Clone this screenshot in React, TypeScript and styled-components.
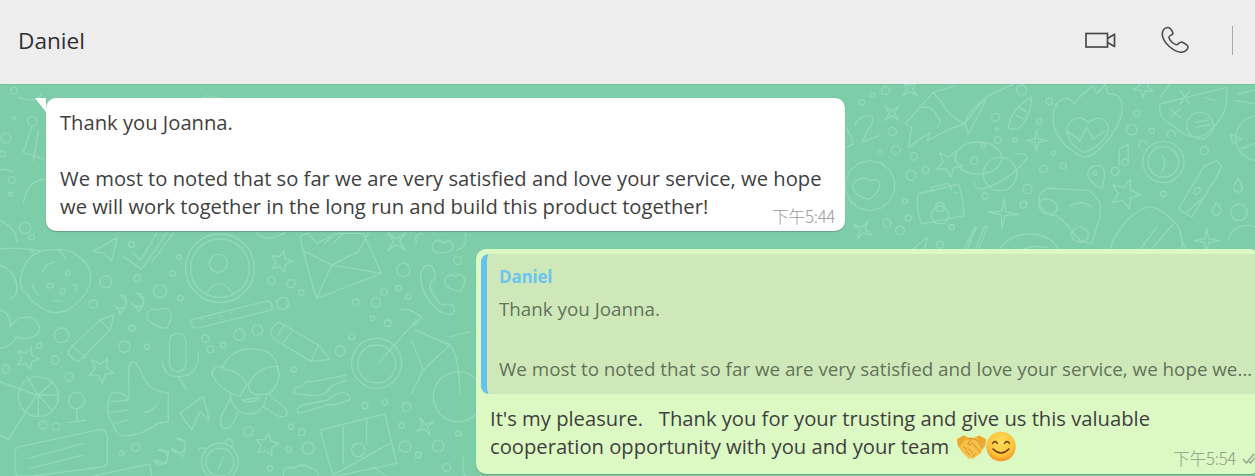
import React from "react";
import styled, { createGlobalStyle } from "styled-components";

const Global = createGlobalStyle`
  html, body { margin: 0; padding: 0; background: #7dcda8; }
  body { font-family: "Open Sans", "Noto Sans", sans-serif; }
`;

const Page = styled.div`
  width: 1255px;
  height: 476px;
  overflow: hidden;
  display: flex;
  flex-direction: column;
`;
const Header = styled.header`
  height: 84px;
  flex: none;
  background: #ededed;
  display: flex;
  align-items: center;
  justify-content: space-between;
  padding: 0 22px 4px 18px;
  box-sizing: border-box;
`;
const Name = styled.div`
  font-size: 22.6px;
  color: #2f2f2f;
`;
const Actions = styled.div`
  display: flex;
  align-items: center;
`;
const IconButton = styled.button<{ $gap: number }>`
  border: 0;
  padding: 0;
  background: none;
  display: flex;
  margin-right: ${(p) => p.$gap}px;
`;
const Divider = styled.div`
  width: 1px;
  height: 29px;
  background: #a9a9a9;
`;
const Chat = styled.main`
  position: relative;
  flex: 1;
  background: #7dcda8;
  box-shadow: inset 0 1px 0 rgba(0, 0, 0, 0.05);
  display: flex;
  flex-direction: column;
  gap: 18px;
  padding: 14px 0 0 46px;
`;
const Pattern = styled.svg`
  position: absolute;
  left: 0;
  top: 0;
  width: 1255px;
  height: 392px;
  filter: blur(0.5px);
  fill: none;
  stroke: #92d9b9;
  stroke-width: 4.2;
  stroke-linecap: round;
  stroke-linejoin: round;
`;
const Bubble = styled.article<{ $outgoing?: boolean }>`
  position: relative;
  box-sizing: border-box;
  border-radius: 10px;
  box-shadow: 0 1px 1px rgba(0, 0, 0, 0.22);
  color: #3f3f3f;
  font-size: 20.2px;
  line-height: 28px;
  width: ${(p) => (p.$outgoing ? 784 : 799)}px;
  margin-left: ${(p) => (p.$outgoing ? 430 : 0)}px;
  background: ${(p) => (p.$outgoing ? "#dcf8c3" : "#ffffff")};
  padding: ${(p) => (p.$outgoing ? "5px" : "10px 14px 11px")};
`;
const Tail = styled.span`
  position: absolute;
  left: -11px;
  top: 0;
  width: 0;
  height: 0;
  border-top: 14px solid #fff;
  border-left: 11px solid transparent;
`;
const Paragraph = styled.p<{ $pre?: boolean }>`
  margin: 0;
  white-space: ${(p) => (p.$pre ? "pre" : "normal")};
`;
const Quote = styled.section`
  box-sizing: border-box;
  height: 140px;
  background: #cfe8b9;
  border-left: 6px solid #65c3ec;
  border-radius: 8px 0 0 8px;
  padding: 9px 0 0 12px;
  color: #62735a;
  font-size: 18.8px;
  line-height: 30px;
`;
const QuoteAuthor = styled.div`
  color: #6cc5ee;
  font-weight: 700;
  font-size: 17px;
  letter-spacing: -0.2px;
  line-height: 28px;
  margin-bottom: 3px;
`;
const QuoteLine = styled.div`
  white-space: nowrap;
`;
const QuoteSpacer = styled.div`
  height: 30px;
`;
const Reply = styled.div`
  padding: 10px 9px 0;
  height: 75px;
  box-sizing: border-box;
`;
const Time = styled.time<{ $outgoing?: boolean }>`
  position: absolute;
  right: ${(p) => (p.$outgoing ? 0 : 10)}px;
  bottom: ${(p) => (p.$outgoing ? 5 : 4)}px;
  display: flex;
  align-items: center;
  gap: 6px;
  font-family: "Noto Sans CJK SC", "Open Sans", sans-serif;
  font-weight: 300;
  font-size: 16.8px;
  line-height: 22px;
  letter-spacing: -0.3px;
  color: ${(p) => (p.$outgoing ? "#8f9d86" : "#9a9a9a")};
`;
const EmojiRow = styled.span`
  display: inline-flex;
  vertical-align: middle;
  margin-left: 3px;
  margin-top: -4px;
  align-items: center;
`;

/* ---- doodle helpers, coordinates are 3x page pixels ---- */
type C = [number, number, number];
const star = (cx: number, cy: number, R: number, r: number, n = 5, rot = -90) => {
  const pts: string[] = [];
  for (let i = 0; i < n * 2; i++) {
    const a = ((rot + (i * 180) / n) * Math.PI) / 180;
    const d = i % 2 ? r : R;
    pts.push(`${(cx + d * Math.cos(a)).toFixed(1)},${(cy + d * Math.sin(a)).toFixed(1)}`);
  }
  return pts.join(" ");
};
const blob = (cx: number, cy: number, R: number, n: number, amp: number) => {
  let d = "";
  for (let i = 0; i < n; i++) {
    const a1 = (i / n) * 2 * Math.PI;
    const a2 = ((i + 1) / n) * 2 * Math.PI;
    const am = (a1 + a2) / 2;
    const p = (a: number, q: number) => `${(cx + q * Math.cos(a)).toFixed(1)} ${(cy + q * Math.sin(a)).toFixed(1)}`;
    d += (i === 0 ? `M${p(a1, R)}` : "") + `Q${p(am, R + amp)} ${p(a2, R)}`;
  }
  return d + "Z";
};

const dotsA: C[] = [
  [317,155,18],[280,222,12],[412,145,10],[518,130,8],[537,82,7],[480,183,20],[542,204,8],[395,43,9],[185,316,22],[118,347,8],[397,295,9],[373,350,17],[441,350,8],[165,390,12],[208,441,12],[18,417,12],[95,22,8],[616,326,11],[632,358,10],[670,345,8],[718,314,17],[772,300,16],[1021,363,15],[1055,320,9],[882,418,8],[815,151,11],[873,161,12],[904,188,8],[848,220,18],[1210,120,20],[1067,217,10],[1128,217,14],[1152,185,10],[1196,175,8],[1225,200,8],[1118,265,7],[1163,280,10],[1373,92,12],[1095,527,9],[1154,517,8],[1220,532,13],[1205,586,8],[1375,610,8],[745,604,14],[873,590,8],[905,607,10],[925,655,18],[866,658,8],[1215,650,17],[1315,648,17],[1255,675,9],[1340,712,12],[365,670,7],[407,652,12],[128,585,12],[168,590,11],[810,715,8],
  [655,100,27],[660,115,103],[660,115,88],
];
const pathsA: string[] = [
  "M620 192Q655 130 700 192",
  "M0 58C30 48 90 60 120 62",
  "M135 240C120 230 90 215 80 190C50 175 62 130 75 105C90 70 130 55 165 60C210 50 265 90 270 130C280 175 240 215 205 240C175 250 150 250 135 240Z",
  "M125 125Q140 100 165 95M175 60Q190 70 195 85M205 120a6 9 20 1 0 .1 0M150 160a10 7 0 1 0 .1 0M190 175a7 10 20 1 0 .1 0M215 165Q240 160 225 185M160 212L185 214M100 160Q95 175 115 195",
  "M0 105Q40 120 50 160Q55 200 30 205",
  "M0 240Q35 250 30 290Q60 250 100 265Q130 290 110 315Q70 335 50 320Q30 355 0 355",
  "M280 65L352 22L335 92L312 70Z",
  "M372 80L425 118L500 8M395 65L422 90L470 10M455 98L522 8",
  "M572 270L800 213Q822 215 815 240L590 295Q568 290 572 270ZM603 268l4 0M630 265l4 0M660 258l4 0M692 250l4 0",
  "M205 360L300 270L340 255L332 298L240 392Q225 398 205 372ZM215 345L258 385M300 270L330 300",
  "M812 300L835 275L955 345L990 388L935 395L818 325ZM850 290L832 318M875 305L852 335M955 345L935 392",
  "M508 350V335A25 25 0 0 1 558 335V400A25 25 0 0 1 508 400ZM487 395C490 430 515 440 535 440C570 440 600 420 595 365M535 440L560 478",
  "M385 510C395 480 375 430 392 400C408 385 415 410 430 440C445 470 460 480 475 482L505 490V575L475 580C445 600 415 618 370 618C345 615 345 590 335 575C320 560 320 510 335 490C350 485 380 490 385 510ZM335 515L385 510M330 548L385 540M345 580L385 570M430 545Q450 550 470 525",
  "M665 420C680 370 730 350 770 358C810 360 835 390 835 425",
  "M635 430C640 405 665 405 680 420C700 420 735 440 740 465L720 500C690 490 650 470 635 430Z",
  "M745 465C760 430 800 405 830 410C845 425 835 465 810 490L770 495C755 490 745 480 745 465Z",
  "M690 495C695 530 720 555 755 552C780 548 795 530 800 495",
  "M690 510C670 540 650 580 670 595C695 600 705 570 715 545M805 490C820 510 870 535 860 555C845 570 820 550 790 530",
  "M725 510Q755 525 780 503Z",
  "M0 455L110 495L25 628L0 615M115 440a60 60 0 1 1 -.1 0M115 495L175 495M115 495L160 455M115 495L155 540M115 495V555M115 495L80 440",
  "M230 488a24 24 0 1 1 -.1 0M230 536V572M205 578L258 570",
  "M885 490Q875 470 905 470Q915 450 940 455L1040 435M880 490L945 498Q990 490 990 470L1040 450M895 545Q885 530 910 525L985 510Q1000 490 1030 488Q1055 495 1050 510L1000 525Q980 520 970 530L895 550Z",
  "M575 600L540 550L580 520L610 500L628 570L600 545Z",
  "M1130 325a75 75 0 1 1 -.1 0M1130 345a57 57 0 1 1 -.1 0M1135 400L1250 270M1205 240Q1225 230 1265 262L1240 290M1245 300L1350 345L1270 420L1235 330M1345 340Q1375 360 1380 490M1350 320L1410 305M1270 420L1235 490M1375 425a75 75 0 1 1 -.1 0",
  "M960 600L1155 552L1190 700L1000 740ZM1030 585V700M1100 565V640M1075 640a20 20 0 1 1 -.1 0M1000 735L1170 640M1120 710L1160 740",
  "M60 650L300 598Q325 600 322 630L322 690Q325 710 300 712L100 738H60Q45 740 45 710V670Q45 650 60 650ZM85 685L250 640M90 715L250 675",
  "M280 738L450 702L455 738",
  "M360 195a20 20 0 1 1 -16 32Q360 240 358 252Q372 240 380 218ZM410 190a20 20 0 1 1 -16 30Q412 232 415 245Q432 230 432 210ZM475 660a22 22 0 1 1 -14 30Q480 695 498 700Q506 680 505 665ZM530 625a22 22 0 1 1 -16 30Q530 662 550 680Q558 650 555 635Z",
  "M470 240C455 230 435 250 442 265C450 285 485 295 500 295C515 270 520 245 500 235C488 232 480 240 470 240Z",
  "M1365 140C1350 125 1330 145 1335 160C1340 175 1370 185 1380 185C1395 165 1400 145 1385 135C1375 130 1370 135 1365 140Z",
  "M1320 30C1305 30 1290 45 1300 62C1312 72 1340 72 1355 58C1365 45 1355 30 1340 35Q1330 42 1320 30Z",
  "M1285 105C1265 110 1258 130 1265 165C1275 205 1310 250 1345 254C1365 252 1370 238 1355 225C1335 215 1330 235 1315 215C1295 190 1280 160 1300 150C1310 145 1305 105 1285 105Z",
  "M900 20C910 10 920 10 925 10L950 40L1010 10L1090 10L1145 130L950 205Q925 130 900 20ZM950 205L995 105L1145 130M905 60L995 105L1075 65L1105 10M975 40L1005 10M1000 40L1030 10",
  "M1250 40Q1240 15 1265 10M1395 10Q1405 50 1370 60",
  "M770 10Q800 40 860 5",
  "M660 640a55 55 0 1 1 -.1 0M660 655a42 42 0 1 1 -.1 0M675 640a12 12 0 1 1 20 8M670 680L655 720M595 660a10 10 0 1 1 20 8",
  "M850 738Q850 705 885 715Q905 695 935 715Q955 720 955 738",
  "M1390 680Q1385 738 1400 738",
];
const starsA: [number, number, number, number, number, number][] = [
  [843,95,34,15,5,-75],[82,385,36,16,5,-70],[303,420,40,18,5,-60],[800,645,36,17,5,-80],
  [1190,35,38,8,4,-45],[1275,590,30,7,4,-30],
];

const dotsB: C[] = [
  [65,55,9],[97,33,7],[137,20,12],[157,143,12],[120,205,7],[167,198,13],[222,217,11],[213,274,15],[257,257,10],[403,230,11],[195,352,7],[205,402,9],[140,417,12],[180,440,13],[435,337,9],[562,315,14],[550,362,10],[335,430,8],[545,18,15],[628,52,10],[598,112,8],[467,100,12],[473,168,10],[470,135,4],[525,168,6],[430,185,6],[640,208,6],[610,255,11],[670,245,9],[875,137,16],[890,87,9],[935,140,8],[1093,200,12],[970,330,8],[1197,385,25],[300,482,10],
];
const pathsB: string[] = [
  "M45 125Q55 92 90 95Q110 105 85 135L65 175L118 155",
  "M20 130L40 180L10 195",
  "M205 190L215 130L195 120L240 70L280 25L345 5M205 190L270 145L262 170L330 135L372 120L440 38L520 0M240 70Q280 65 290 95L300 110L295 130M280 25Q310 60 330 90L372 120M375 120L385 90L440 38L425 75L385 150Z",
  "M505 130Q515 70 575 40Q575 95 540 130Q515 140 505 130ZM540 70L560 85M530 95L550 105",
  "M640 85C650 40 690 30 700 60C715 40 740 20 760 5L770 30L795 0L805 30C845 25 850 60 845 90C830 150 770 215 735 220C700 210 650 170 640 120ZM680 130C710 80 740 110 745 115C790 85 810 120 805 140C795 175 750 200 735 205C705 195 680 170 680 130ZM680 140L720 170L740 130L760 165L795 140",
  "M960 40L990 0M1160 10C1165 60 1155 100 1110 140C1080 170 1040 165 1000 125C970 110 955 95 960 60ZM1040 125a40 40 0 1 0 80 0a40 40 0 1 0 -80 0M1065 115L1105 108M1070 130L1110 122M1020 20L1050 60M1050 20L1020 60M990 75L1020 100M1020 75L990 100M1095 40L1125 50",
  "M1255 95a65 65 0 1 0 0 135M1170 150L1205 165L1180 180ZM1205 195L1250 175M1195 30L1255 15M1185 50L1255 60",
  blob(90, 305, 72, 14, 8),
  "M90 290C75 275 40 285 38 310C45 335 75 345 90 345C110 330 125 310 118 295C110 285 100 285 90 290Z",
  "M235 330L355 300Q370 340 372 395L245 420Q225 370 235 330ZM280 322L275 310L325 298L335 315M300 367a26 26 0 1 0 .1 0M300 355a14 14 0 1 0 .1 0M342 325l6 0",
  "M415 270a70 48 0 1 1 .1 0ZM405 295Q395 310 425 315Q505 295 560 225Q565 205 530 210M480 220a50 50 0 1 0 .1 0",
  "M600 330L620 312L750 320L780 355V400L755 480L720 470L680 420L650 395C610 395 590 360 600 330ZM620 345a28 22 20 1 0 .1 0M720 430a25 22 0 1 0 .1 0M690 365Q730 345 755 370",
  "M765 245C745 250 740 265 745 280C755 295 775 310 785 315C795 285 800 255 780 245Z M765 262a6 6 0 1 0 .1 0",
  "M825 250a12 12 0 1 0 .1 0M838 245V195L865 180V225M855 225a10 10 0 1 0 .1 0",
  "M970 172a62 62 0 1 0 .1 0M970 188a46 46 0 1 0 .1 0M965 212Q985 240 965 262M900 190a12 12 0 1 1 20 -10M985 160a12 12 0 1 1 20 -5",
  "M1055 400L1015 375L1090 250L1115 235L1130 230L1145 245L1135 270ZM1085 345L1040 385M1075 310a12 8 -50 1 0 .1 0",
  "M1195 285Q1165 320 1200 325Q1215 315 1195 285ZM1130 355Q1105 390 1130 395Q1155 385 1130 355Z",
  "M810 510C810 460 870 385 920 370Q950 360 1010 420Q1030 450 1025 510M890 510L950 430M930 500L1000 420M1020 450L1040 510",
  "M1165 470Q1175 430 1210 425Q1240 422 1245 430",
  "M470 510Q500 450 570 450Q640 450 660 510M530 510Q560 480 620 490",
  "M200 510L262 460L250 510M365 510L405 430L410 430L375 510M400 510L435 425L442 430L410 510",
];
const starsB: [number, number, number, number, number, number][] = [
  [328,238,42,19,5,-60],[855,330,46,20,5,-70],[910,10,32,12,5,-50],
  [155,88,30,7,4,-45],[590,170,32,7,4,-90],[490,388,46,8,4,-85],[68,438,32,8,4,-60],[210,14,32,8,4,-45],[1100,470,38,8,4,-90],
];
const dotsC: C[] = [
  [42,20,10],[42,102,5],[18,162,15],[8,210,9],[97,112,14],[228,62,13],[185,75,7],[190,50,7],[35,288,10],[32,330,6],[75,432,17],[95,500,5],[280,100,4],[640,62,25],
];
const pathsC: string[] = [
  "M95 130L70 205L130 225M115 140L100 230M55 40Q110 60 125 30M260 60L335 75L310 45L280 90M370 80L435 45M560 80L620 35M830 80L890 60",
  "M0 260Q20 250 35 265M70 360Q80 290 135 285M0 410Q50 430 50 475",
];

const Doodle = ({ dots, paths, stars, x, y }: { dots: C[]; paths: string[]; stars: typeof starsA; x: number; y: number }) => (
  <g transform={`translate(${x} ${y}) scale(0.3333)`}>
    {dots.map(([cx, cy, r], i) => (
      <circle key={i} cx={cx} cy={cy} r={r} />
    ))}
    {paths.map((d, i) => (
      <path key={i} d={d} />
    ))}
    {stars.map(([cx, cy, R, r, n, rot], i) => (
      <polygon key={i} points={star(cx, cy, R, r, n, rot)} />
    ))}
  </g>
);

const VideoIcon = () => (
  <svg width="31" height="17" viewBox="0 0 31 17" fill="none" stroke="#4a4a4a" strokeWidth="1.7">
    <rect x="1" y="1.5" width="21.5" height="13.5" />
    <path d="M22.5 6.5L29.5 2.2V14.5L22.5 10.5" strokeLinejoin="round" />
  </svg>
);
const PhoneIcon = () => (
  <svg width="28" height="28" viewBox="302 78 85 84" fill="none" stroke="#4a4a4a" strokeWidth="4.8" strokeLinejoin="round">
    <path d="M322 82C312 82 305 92 306 105C310 130 340 155 362 157C375 158 384 148 384 142C384 136 374 130 365 126C358 124 354 136 347 134C338 130 328 120 326 112C324 106 340 106 338 98C335 90 330 82 322 82Z" />
  </svg>
);
const Handshake = () => (
  <svg width="29" height="26" viewBox="0 0 30 26">
    <path d="M0 5L7 1L15 4L23 1L30 5L29 12L24 20L17 25L12 25L5 18L1 12Z" fill="#f6c04a" />
    <path d="M0 5L7 1L10 3L3 13L1 12ZM30 5L23 1L20 3L27 13L29 12Z" fill="#eda92c" />
    <path d="M10 5L15 4L21 6L26 14M15 4L11 10Q13 12 16 9L24 18M12 15L16 19M9 17L13 21M7 13L10 15M19 20L16 23" fill="none" stroke="#d48b1f" strokeWidth="1" strokeLinecap="round" />
  </svg>
);
const Smile = () => (
  <svg width="30" height="31" viewBox="0 0 30 31">
    <defs>
      <radialGradient id="sm" cx="50%" cy="35%" r="70%">
        <stop offset="0" stopColor="#ffdf5a" />
        <stop offset="0.65" stopColor="#fdc23a" />
        <stop offset="1" stopColor="#f3851b" />
      </radialGradient>
    </defs>
    <circle cx="15" cy="15.5" r="14.7" fill="url(#sm)" />
    <path d="M6.5 12.5Q9 8.5 11.5 12.5M18.5 12.5Q21 8.5 23.5 12.5" fill="none" stroke="#6b3a12" strokeWidth="1.4" strokeLinecap="round" />
    <path d="M7 18Q15 26 23 18" fill="none" stroke="#6b3a12" strokeWidth="1.5" strokeLinecap="round" />
  </svg>
);
const Check = () => (
  <svg width="18" height="11" viewBox="0 0 18 11" fill="none" stroke="#8f9d8a" strokeWidth="1.2">
    <path d="M1 6L4.5 10L12 1M7 8.5L8.5 10L16 1" />
  </svg>
);

export default function App() {
  return (
    <Page>
      <Global />
      <Header>
        <Name>Daniel</Name>
        <Actions>
          <IconButton $gap={45} aria-label="Video call">
            <VideoIcon />
          </IconButton>
          <IconButton $gap={43} aria-label="Voice call">
            <PhoneIcon />
          </IconButton>
          <Divider />
        </Actions>
      </Header>
      <Chat>
        <Pattern viewBox="0 0 1255 392">
          <Doodle dots={dotsA} paths={pathsA} stars={starsA} x={0} y={146} />
          <Doodle dots={dotsB} paths={pathsB} stars={starsB} x={840} y={0} />
          <Doodle dots={dotsC} paths={pathsC} stars={[]} x={0} y={0} />
        </Pattern>
        <Bubble>
          <Tail />
          <Paragraph>Thank you Joanna.</Paragraph>
          <Paragraph>&nbsp;</Paragraph>
          <Paragraph>
            We most to noted that so far we are very satisfied and love your service, we hope
            <br />
            we will work together in the long run and build this product together!
          </Paragraph>
          <Time>下午5:44</Time>
        </Bubble>
        <Bubble $outgoing>
          <Quote>
            <QuoteAuthor>Daniel</QuoteAuthor>
            <QuoteLine>Thank you Joanna.</QuoteLine>
            <QuoteSpacer />
            <QuoteLine>We most to noted that so far we are very satisfied and love your service, we hope we…</QuoteLine>
          </Quote>
          <Reply>
            <Paragraph $pre>It's my pleasure.   Thank you for your trusting and give us this valuable</Paragraph>
            <Paragraph>
              cooperation opportunity with you and your team{" "}
              <EmojiRow>
                <Handshake />
                <Smile />
              </EmojiRow>
            </Paragraph>
          </Reply>
          <Time $outgoing>
            下午5:54
            <Check />
          </Time>
        </Bubble>
      </Chat>
    </Page>
  );
}
